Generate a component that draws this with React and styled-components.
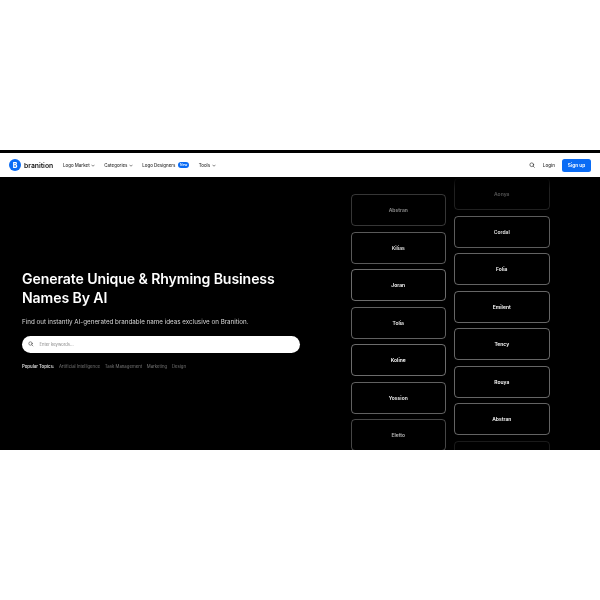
import React from "react";
import styled, { createGlobalStyle } from "styled-components";

const Global = createGlobalStyle`
  html, body { margin: 0; padding: 0; background: #fff; }
  body { font-family: Inter, "Liberation Sans", sans-serif; }
`;
const Page = styled.div`
  width: 600px;
  height: 600px;
  padding-top: 150px;
  box-sizing: border-box;
  background: #fff;
  overflow: hidden;
`;
const Shot = styled.div`
  height: 300px;
  display: flex;
  flex-direction: column;
  border-top: 3px solid #000;
  box-sizing: border-box;
  filter: blur(0.3px);
`;
const Header = styled.header`
  height: 24px;
  flex: none;
  display: flex;
  align-items: center;
  padding: 0 9px;
  background: #fff;
`;
const Logo = styled.div`
  display: flex;
  align-items: center;
  gap: 3px;
  width: 54px;
  font-size: 6.8px;
  font-weight: 600;
  color: #111;
`;
const LogoMark = styled.span`
  width: 12px;
  height: 12px;
  border-radius: 50%;
  background: #0a6cf5;
  color: #fff;
  font-size: 7px;
  font-weight: 800;
  display: flex;
  align-items: center;
  justify-content: center;
`;
const Nav = styled.nav`
  display: flex;
  align-items: center;
  gap: 9.2px;
  flex: 1;
`;
const NavItem = styled.span`
  display: flex;
  align-items: center;
  gap: 1.5px;
  font-size: 4.45px;
  font-weight: 500;
  color: #333;
`;
const Badge = styled.span`
  width: 11.5px;
  height: 6px;
  margin-left: 1px;
  border-radius: 3px;
  background: #0a6cf5;
  color: #fff;
  font-size: 3.4px;
  line-height: 6px;
  text-align: center;
`;
const Actions = styled.div`
  display: flex;
  align-items: center;
`;
const Login = styled.span`
  margin: 0 7px 0 8px;
  font-size: 4.6px;
  font-weight: 500;
  color: #333;
`;
const SignUp = styled.span`
  width: 29px;
  height: 13px;
  border-radius: 2.5px;
  background: #0a6cf5;
  color: #fff;
  font-size: 4.8px;
  font-weight: 600;
  display: flex;
  align-items: center;
  justify-content: center;
`;
const Hero = styled.main`
  flex: 1;
  min-height: 0;
  display: flex;
  background: #000;
  overflow: hidden;
`;
const Intro = styled.section`
  width: 278px;
  margin-left: 22px;
  padding-top: 91.5px;
`;
const Title = styled.h1`
  margin: 0;
  font-size: 14.1px;
  line-height: 19.5px;
  font-weight: 600;
  color: #fff;
  letter-spacing: -0.1px;
`;
const Lead = styled.p`
  margin: 9.5px 0 0;
  font-size: 6.25px;
  line-height: 10px;
  color: #d6d6d6;
`;
const Search = styled.div`
  height: 17px;
  margin-top: 8.5px;
  display: flex;
  align-items: center;
  gap: 6px;
  padding-left: 6px;
  border-radius: 8.5px;
  background: #fff;
  font-size: 4.2px;
  color: #8a8a8a;
`;
const Topics = styled.div`
  margin-top: 11.5px;
  display: flex;
  gap: 4.7px;
  font-size: 4.3px;
  color: #777;
`;
const TopicLabel = styled.span`
  font-weight: 600;
  color: #ddd;
`;
const Columns = styled.div`
  position: relative;
  display: flex;
  gap: 8px;
  margin-left: 50.5px;
  &::before {
    content: "";
    position: absolute;
    inset: 0 0 auto 0;
    height: 12px;
    background: linear-gradient(#000, rgba(0, 0, 0, 0));
    z-index: 1;
  }
`;
const Column = styled.div`
  width: 95.5px;
  margin-top: ${(p) => p.$offset}px;
  display: flex;
  flex-direction: column;
  gap: 5.55px;
`;
const Card = styled.div`
  height: 32px;
  flex: none;
  box-sizing: border-box;
  border: 1px solid rgba(255, 255, 255, ${(p) => p.$level * 0.5});
  border-radius: 4px;
  display: flex;
  align-items: center;
  justify-content: center;
  font-size: 5px;
  font-weight: 600;
  color: rgba(255, 255, 255, ${(p) => Math.min(1, p.$level * 1.25)});
`;

const SearchIcon = ({ size, color }) => (
  <svg width={size} height={size} viewBox="0 0 24 24" fill="none" stroke={color} strokeWidth="2.4" strokeLinecap="round">
    <circle cx="11" cy="11" r="7.5" />
    <path d="M17 17l4.5 4.5" />
  </svg>
);
const Chevron = () => (
  <svg width="4" height="3" viewBox="0 0 8 6" fill="none" stroke="#444" strokeWidth="1.3">
    <path d="M1 1.5l3 3 3-3" />
  </svg>
);

const left = [
  ["Abstran", 0.42], ["Kilias", 0.7], ["Joran", 0.85], ["Tolia", 0.75],
  ["Koline", 0.85], ["Yossion", 0.75], ["Eletto", 0.55],
];
const right = [
  ["Aonya", 0.25], ["Cordal", 0.72], ["Folia", 0.78], ["Emilent", 0.8],
  ["Tency", 0.8], ["Rouya", 0.8], ["Abstran", 0.78], ["", 0.2],
];

export default function App() {
  return (
    <Page>
      <Global />
      <Shot>
        <Header>
          <Logo><LogoMark>B</LogoMark>branition</Logo>
          <Nav>
            <NavItem>Logo Market <Chevron /></NavItem>
            <NavItem>Categories <Chevron /></NavItem>
            <NavItem>Logo Designers <Badge>New</Badge></NavItem>
            <NavItem>Tools <Chevron /></NavItem>
          </Nav>
          <Actions>
            <SearchIcon size={6} color="#222" />
            <Login>Login</Login>
            <SignUp>Sign up</SignUp>
          </Actions>
        </Header>
        <Hero>
          <Intro>
            <Title>Generate Unique &amp; Rhyming Business Names By AI</Title>
            <Lead>Find out instantly AI-generated brandable name ideas exclusive on Branition.</Lead>
            <Search><SearchIcon size={5.5} color="#333" />Enter keywords...</Search>
            <Topics>
              <TopicLabel>Popular Topics:</TopicLabel>
              <span>Artificial Intelligence</span>
              <span>Task Management</span>
              <span>Marketing</span>
              <span>Design</span>
            </Topics>
          </Intro>
          <Columns>
            <Column $offset={17}>
              {left.map(([n, l]) => <Card key={n} $level={l}>{n}</Card>)}
            </Column>
            <Column $offset={1}>
              {right.map(([n, l]) => <Card key={n + l} $level={l}>{n}</Card>)}
            </Column>
          </Columns>
        </Hero>
      </Shot>
    </Page>
  );
}
